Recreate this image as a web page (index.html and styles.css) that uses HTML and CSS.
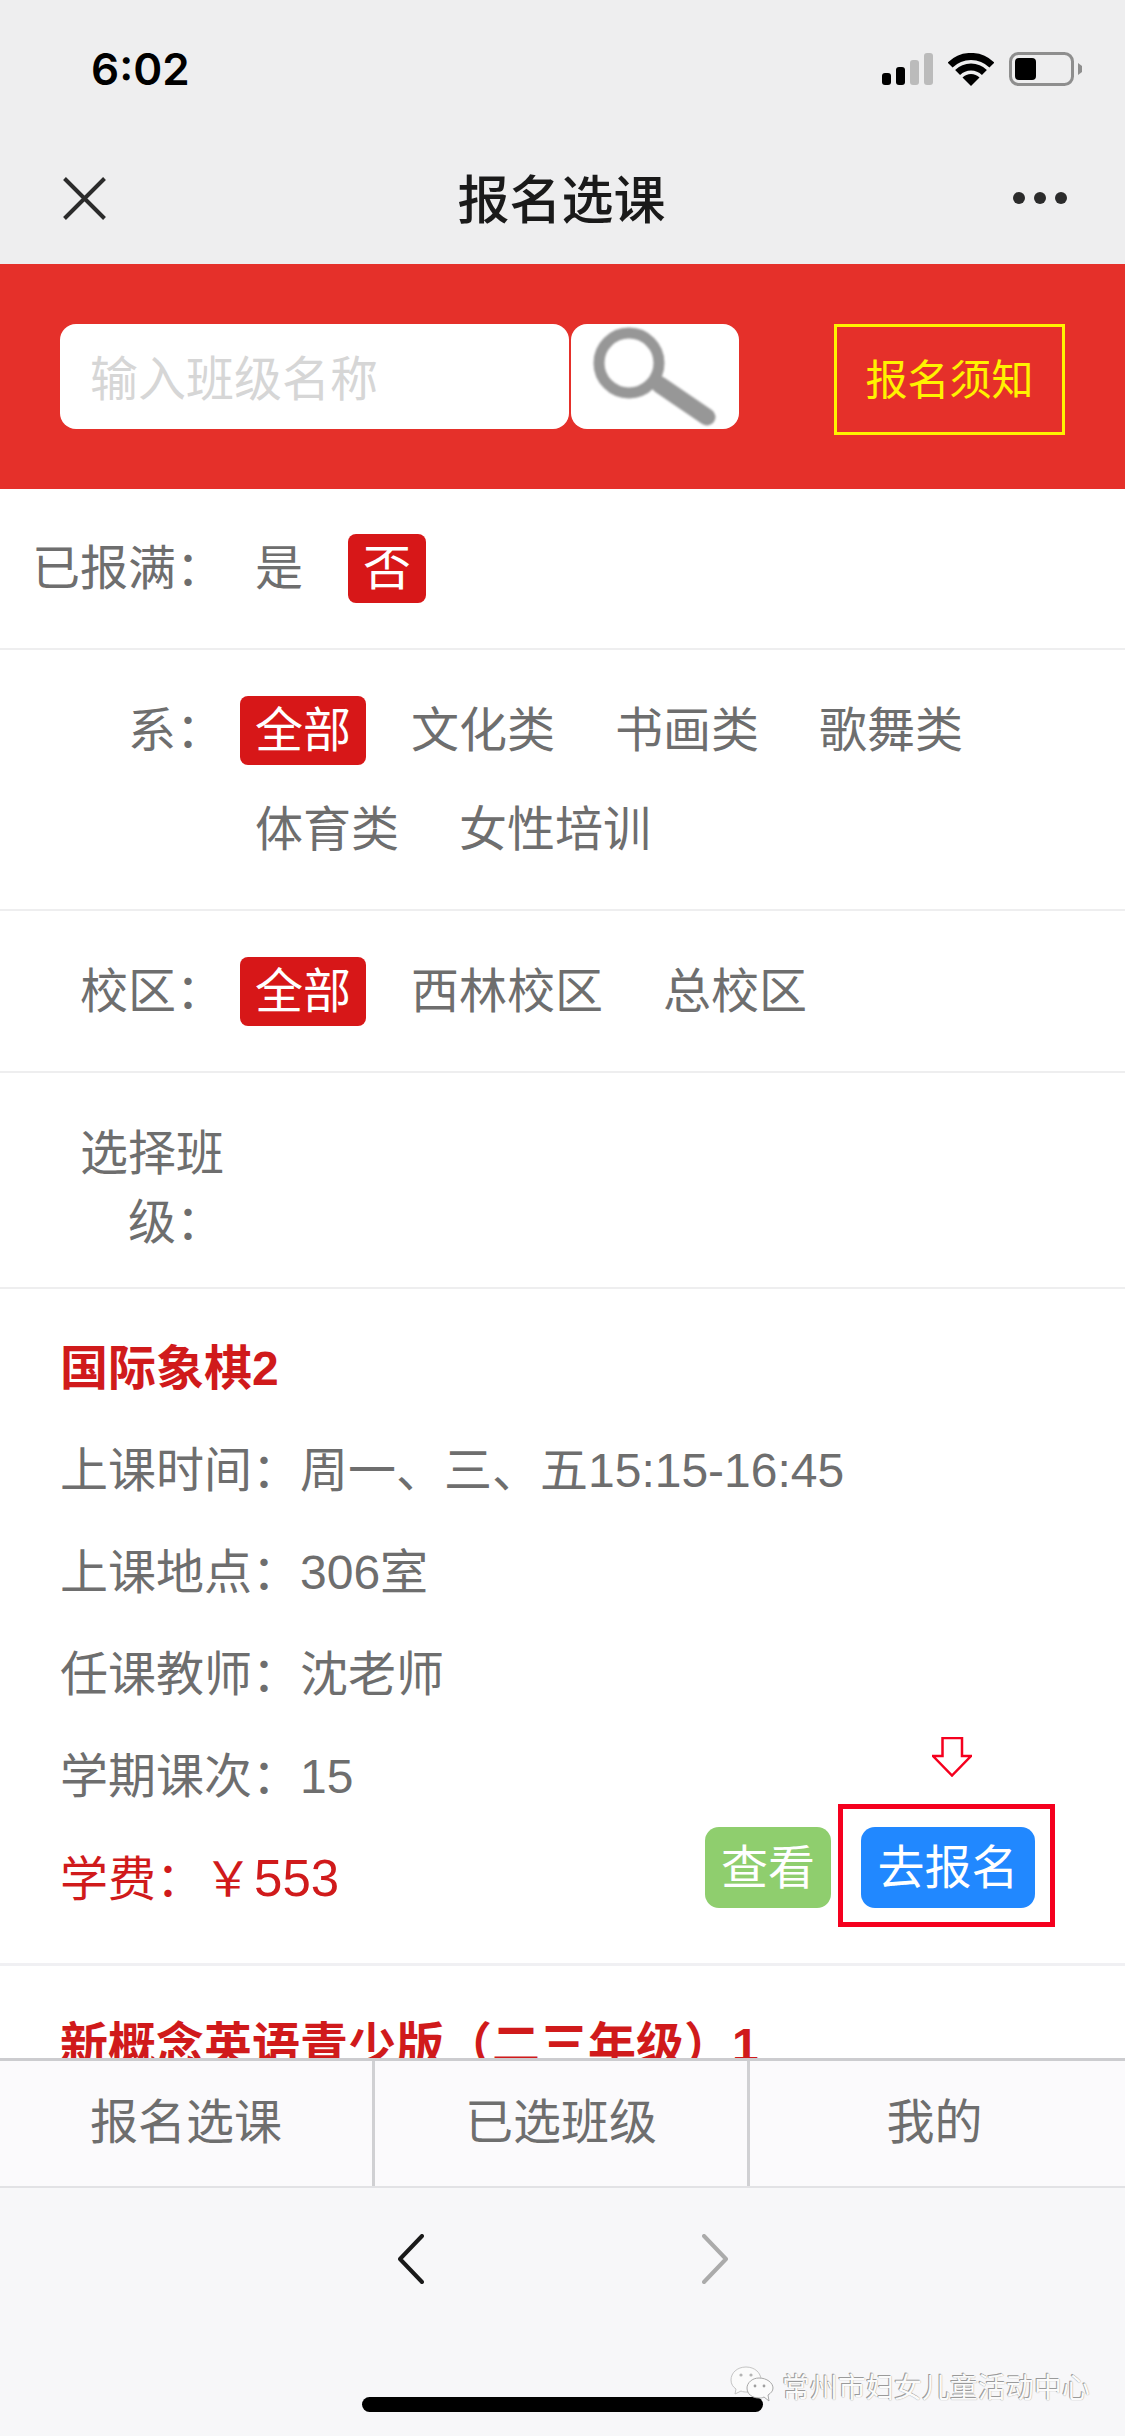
FILE: index.html
```html
<!DOCTYPE html>
<html lang="zh-CN">
<head>
  <meta charset="UTF-8" />
  <meta name="viewport" content="width=device-width, initial-scale=1.0" />
  <title>报名选课</title>
  <link rel="stylesheet" href="styles.css">
</head>
<body>
  <div class="phone">
    <header class="top">
      <div class="status">
        <span class="time">6:02</span>
        <div class="status-icons">
          <svg width="51" height="32" viewBox="0 0 51 32">
            <rect x="0" y="20" width="9" height="12" rx="3" fill="#000"/>
            <rect x="14" y="14" width="9" height="18" rx="3" fill="#000"/>
            <rect x="28" y="7" width="9" height="25" rx="3" fill="#bbb"/>
            <rect x="42" y="0" width="9" height="32" rx="3" fill="#bbb"/>
          </svg>
          <svg width="46" height="33" viewBox="0 0 46 33">
            <path d="M2.1 12.1A29.5 29.5 0 0 1 43.9 12.1" fill="none" stroke="#000" stroke-width="7"/>
            <path d="M9.6 19.6A19 19 0 0 1 36.4 19.6" fill="none" stroke="#000" stroke-width="7"/>
            <path d="M23 33L14.5 24.5A12 12 0 0 1 31.5 24.5Z" fill="#000"/>
          </svg>
          <svg width="73" height="34" viewBox="0 0 73 34">
            <rect x="1.5" y="1.5" width="62" height="31" rx="8" fill="none" stroke="#8e8e8e" stroke-width="3"/>
            <rect x="6" y="6" width="21" height="22" rx="4" fill="#000"/>
            <path d="M69 11L73 14V20L69 23Z" fill="#8e8e8e"/>
          </svg>
        </div>
      </div>
      <nav class="navbar">
        <svg class="nav-close" width="43" height="43" viewBox="0 0 43 43">
          <path d="M1.5 1.5L41.5 41.5M41.5 1.5L1.5 41.5" fill="none" stroke="#2b2b2b" stroke-width="4"/>
        </svg>
        <h1 class="nav-title">报名选课</h1>
        <div class="nav-more"><i></i><i></i><i></i></div>
      </nav>
    </header>

    <section class="search-bar">
      <div class="search-input">输入班级名称</div>
      <div class="search-btn">
        <svg width="168" height="105" viewBox="0 0 168 105">
          <circle cx="58" cy="39" r="30" fill="none" stroke="#979797" stroke-width="11"/>
          <path d="M89 61L136 93" fill="none" stroke="#979797" stroke-width="17" stroke-linecap="round"/>
        </svg>
      </div>
      <div class="notice-btn">报名须知</div>
    </section>

    <main class="content">
      <div class="filter filter-first">
        <div class="filter-label filter-label-wide">已报满：</div>
        <div class="chips">
          <span class="chip">是</span>
          <span class="chip active">否</span>
        </div>
      </div>
      <div class="filter">
        <div class="filter-label">系：</div>
        <div class="chips">
          <span class="chip active">全部</span>
          <span class="chip">文化类</span>
          <span class="chip">书画类</span>
          <span class="chip">歌舞类</span>
          <span class="chip">体育类</span>
          <span class="chip">女性培训</span>
        </div>
      </div>
      <div class="filter">
        <div class="filter-label">校区：</div>
        <div class="chips">
          <span class="chip active">全部</span>
          <span class="chip">西林校区</span>
          <span class="chip">总校区</span>
        </div>
      </div>
      <div class="filter filter-class">
        <div class="filter-label">选择班级：</div>
      </div>

      <article class="course">
        <h3 class="course-name">国际象棋2</h3>
        <p class="course-line">上课时间：周一、三、五15:15-16:45</p>
        <p class="course-line">上课地点：306室</p>
        <p class="course-line">任课教师：沈老师</p>
        <p class="course-line">学期课次：15</p>
        <div class="course-foot">
          <p class="course-line course-fee">学费：￥<span class="fee-num">553</span></p>
          <div class="course-btns">
            <span class="btn btn-view">查看</span>
            <span class="btn btn-apply">去报名
              <span class="mark-box"></span>
              <svg class="mark-arrow" width="40" height="40" viewBox="0 0 40 40">
                <path d="M10.5 1H30V19H39L20 38.5L1 19H10.5Z" fill="#fff" stroke="#f5001e" stroke-width="2.5"/>
              </svg>
            </span>
          </div>
        </div>
      </article>
      <article class="course">
        <h3 class="course-name">新概念英语青少版（二三年级）1</h3>
      </article>
    </main>

    <div class="tabs">
      <div class="tab">报名选课</div>
      <div class="tab">已选班级</div>
      <div class="tab">我的</div>
    </div>

    <footer class="toolbar">
      <svg width="26" height="50" viewBox="0 0 26 50">
        <path d="M24 2L2 25L24 48" fill="none" stroke="#1a1a1a" stroke-width="4" stroke-linecap="round" stroke-linejoin="round"/>
      </svg>
      <svg width="26" height="50" viewBox="0 0 26 50">
        <path d="M2 2L24 25L2 48" fill="none" stroke="#ababab" stroke-width="4" stroke-linecap="round" stroke-linejoin="round"/>
      </svg>
    </footer>

    <div class="home-bar"></div>
    <div class="watermark">
      <svg width="44" height="40" viewBox="0 0 44 40">
        <path d="M16 1C7 1 1 7 1 14C1 18 3 21 6 23L5 28L11 25C13 26 15 26 17 26C26 26 31 20 31 14C31 7 25 1 16 1Z" fill="#fbfbfb" stroke="#c4c4c4"/>
        <path d="M29 12C22 12 17 17 17 22C17 28 22 32 29 32C31 32 32 32 34 31L39 35L38 29C41 27 43 25 43 22C43 17 37 12 29 12Z" fill="#fbfbfb" stroke="#a8a8a8"/>
        <circle cx="11" cy="9" r="1.6" fill="#b5b5b5"/>
        <circle cx="21" cy="9" r="1.6" fill="#b5b5b5"/>
        <circle cx="25" cy="20" r="1.4" fill="#a0a0a0"/>
        <circle cx="34" cy="20" r="1.4" fill="#a0a0a0"/>
      </svg>
      <span class="watermark-text">常州市妇女儿童活动中心</span>
    </div>
  </div>
</body>
</html>
```

FILE: styles.css
```css
* { box-sizing: border-box; margin: 0; padding: 0; }

body {
  font-family: "Liberation Sans", "Noto Sans CJK SC", sans-serif;
  background: #fff;
  color: #6e6e6e;
}

.phone {
  position: relative;
  width: 1125px;
  height: 2436px;
  display: flex;
  flex-direction: column;
  overflow: hidden;
}

/* status + nav */
.top {
  background: #eeeeef;
}

.status {
  height: 132px;
  padding: 6px 43px 0 91px;
  display: flex;
  justify-content: space-between;
  align-items: center;
}

.time {
  font-family: Inter, sans-serif;
  font-size: 44px;
  font-weight: 600;
  color: #000;
}

.status-icons {
  display: flex;
  align-items: center;
  gap: 15px;
}

.navbar {
  height: 132px;
  padding: 0 58px 0 63px;
  display: grid;
  grid-template-columns: 1fr auto 1fr;
  align-items: center;
}

.nav-title {
  font-size: 52px;
  font-weight: 500;
  color: #1a1a1a;
  text-align: center;
  padding: 0 7px 4px 0;
}

.nav-more {
  display: flex;
  justify-content: flex-end;
  gap: 9px;
}

.nav-more i {
  width: 12px;
  height: 12px;
  border-radius: 50%;
  background: #2b2b2b;
}

/* red search bar */
.search-bar {
  height: 225px;
  padding: 60px 0 0 60px;
  background: #e5302a;
  display: flex;
  align-items: flex-start;
}

.search-input {
  width: 509px;
  height: 105px;
  padding-left: 30px;
  background: #fff;
  border-radius: 16px;
  color: #d6d6d6;
  font-size: 48px;
  line-height: 112px;
}

.search-btn {
  width: 168px;
  height: 105px;
  margin-left: 2px;
  background: #fff;
  border-radius: 16px;
  overflow: hidden;
}

.search-btn svg {
  display: block;
  filter: blur(0.8px);
}

.notice-btn {
  width: 231px;
  height: 111px;
  margin-left: 95px;
  border: 3px solid #fff200;
  color: #fff200;
  font-size: 42px;
  line-height: 108px;
  text-align: center;
}

/* filters */
.content {
  flex: 1;
  overflow: hidden;
  background: #fff;
}

.filter {
  padding: 46px 0 45px;
  border-bottom: 2px solid #eeeeef;
  display: flex;
  align-items: flex-start;
  font-size: 48px;
}

.filter-first {
  padding: 45px 0;
}

.filter-label {
  width: 224px;
  padding-left: 80px;
  flex-shrink: 0;
  text-align: right;
  line-height: 69px;
}

.filter-label-wide {
  padding-left: 20px;
}

.filter-class {
  padding-bottom: 30px;
}

.chips {
  flex: 1;
  margin-left: 16px;
  display: flex;
  flex-wrap: wrap;
  gap: 30px;
}

.chip {
  padding: 0 15px;
  line-height: 69px;
  border-radius: 8px;
}

.chip.active {
  background: #d71718;
  color: #fff;
}

/* course cards */
.course {
  padding: 29px 0 33px 60px;
  border-bottom: 3px solid #f0f0f3;
  font-size: 48px;
}

.course-name {
  font-size: 48px;
  font-weight: 700;
  line-height: 102px;
  color: #d01a1b;
}

.course-line {
  line-height: 102px;
}

.course-foot {
  height: 102px;
  padding-right: 90px;
  display: flex;
  justify-content: space-between;
  align-items: flex-start;
}

.course-fee {
  color: #d01a1b;
}

.fee-num {
  margin-left: 2px;
  font-size: 51px;
}

.course-btns {
  display: flex;
  gap: 30px;
  margin-top: -1px;
}

.btn {
  position: relative;
  height: 81px;
  padding: 0 16px;
  border-radius: 14px;
  color: #fff;
  font-size: 47px;
  line-height: 82px;
}

.btn-view {
  background: #8fce6e;
}

.btn-apply {
  padding: 0 16.5px;
  background: #2188ff;
}

/* annotation drawn over the button */
.mark-box {
  position: absolute;
  top: -23px;
  right: -20px;
  bottom: -19px;
  left: -23px;
  border: 5px solid #f5001e;
}

.mark-arrow {
  position: absolute;
  top: -90px;
  left: 71px;
}

/* bottom tabs */
.tabs {
  height: 128px;
  border-top: 3px solid #cccccf;
  background: #fbfafc;
  display: grid;
  grid-template-columns: repeat(3, 1fr);
  flex-shrink: 0;
}

.tab {
  font-size: 48px;
  line-height: 124px;
  text-align: center;
  border-right: 3px solid #d0d0d3;
}

.tab:last-child {
  padding-right: 6px;
  border-right: none;
}

.toolbar {
  height: 250px;
  padding-top: 46px;
  padding-left: 1px;
  border-top: 2px solid #e2e2e5;
  background: #f7f7f9;
  display: flex;
  justify-content: center;
  align-items: flex-start;
  gap: 278px;
  flex-shrink: 0;
}

.home-bar {
  position: absolute;
  left: 362px;
  top: 2397px;
  width: 401px;
  height: 15px;
  border-radius: 8px;
  background: #000;
}

.watermark {
  position: absolute;
  left: 730px;
  top: 2366px;
  display: flex;
  align-items: center;
  gap: 8px;
}

.watermark-text {
  font-size: 28px;
  color: #fbfbfb;
  text-shadow: -1px -1px 0 #9a9a9a, 0 0 1px #888;
}
```
